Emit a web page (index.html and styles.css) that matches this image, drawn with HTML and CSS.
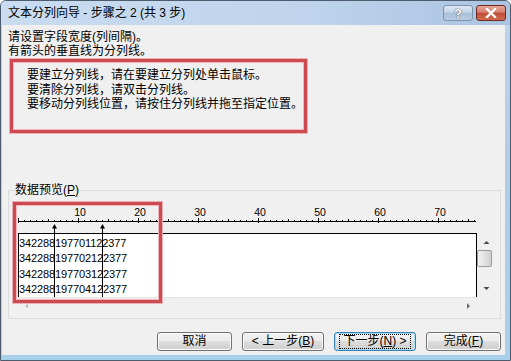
FILE: index.html
```html
<!DOCTYPE html>
<html lang="zh-CN">
<head>
<meta charset="utf-8">
<title>文本分列向导</title>
<link rel="stylesheet" href="styles.css">
</head>
<body>
<div class="window">
  <div class="titlebar">
    <span class="title">文本分列向导 - 步骤之 2 (共 3 步)</span>
    <div class="caption-btns">
      <div class="cbtn help">?</div>
      <div class="cbtn close">
        <svg width="12" height="10" viewBox="0 0 12 10"><path d="M2 1 L10 9 M10 1 L2 9" stroke="#fff" stroke-width="2.4" stroke-linecap="square"/></svg>
      </div>
    </div>
  </div>
  <div class="client">
    <p class="intro">请设置字段宽度(列间隔)。<br>有箭头的垂直线为分列线。</p>
    <div class="hint">
      要建立分列线，请在要建立分列处单击鼠标。<br>
      要清除分列线，请双击分列线。<br>
      要移动分列线位置，请按住分列线并拖至指定位置。
    </div>
    <div class="preview-label">数据预览(<u>P</u>)</div>
    <div class="group">
      <svg class="ruler" width="460" height="42" viewBox="0 0 460 42">
        <defs>
          <pattern id="minor" width="6" height="1" patternUnits="userSpaceOnUse" x="0" y="0">
            <rect width="1" height="1" fill="#000"/>
          </pattern>
        </defs>
        <rect x="0" y="29" width="457" height="1" fill="url(#minor)"/>
        <rect x="0" y="30" width="458" height="1" fill="#000"/>
        <path d="M0.5 27v5M60.5 27v5M120.5 27v5M180.5 27v5M240.5 27v5M300.5 27v5M360.5 27v5M420.5 27v5" stroke="#000" stroke-width="1"/>
        <path d="M30.5 28v2M90.5 28v2M150.5 28v2M210.5 28v2M270.5 28v2M330.5 28v2M390.5 28v2M450.5 28v2" stroke="#000" stroke-width="1"/>
        <g class="ruler-num" text-anchor="middle">
          <text x="62" y="25">10</text>
          <text x="122" y="25">20</text>
          <text x="182" y="25">30</text>
          <text x="242" y="25">40</text>
          <text x="302" y="25">50</text>
          <text x="362" y="25">60</text>
          <text x="422" y="25">70</text>
        </g>
      </svg>
      <div class="data-row">
        <div class="data">
          <div>342288197701122377</div>
          <div>342288197702122377</div>
          <div>342288197703122377</div>
          <div>342288197704122377</div>
        </div>
        <div class="vscroll">
          <svg width="15" height="64" viewBox="0 0 15 64">
            <defs>
              <linearGradient id="thumb" x1="0" x2="1" y1="0" y2="0">
                <stop offset="0" stop-color="#f4f4f4"/>
                <stop offset="1" stop-color="#cfcfcf"/>
              </linearGradient>
            </defs>
            <path d="M6.5 11 L9.5 8 L12.5 11 Z" fill="#4a4a4a"/>
            <rect x="0.5" y="17.5" width="14" height="16" rx="1.5" fill="url(#thumb)" stroke="#9a9a9a"/>
            <path d="M6.5 54 L9.5 57 L12.5 54 Z" fill="#4a4a4a"/>
          </svg>
        </div>
      </div>
      <div class="hscroll">
        <svg width="459" height="15" viewBox="0 0 459 15">
          <path d="M10 6 L7 8 L10 10 Z" fill="#b8b8b8"/>
          <path d="M449 5 L452 8 L449 11 Z" fill="#6a6a6a"/>
        </svg>
      </div>
      <svg class="col-breaks" width="120" height="110" viewBox="0 0 120 110">
        <path d="M45.5 34 V106 M93.5 34 V106" stroke="#000" stroke-width="1"/>
        <path d="M45.5 33 L43 37.5 L48 37.5 Z M93.5 33 L91 37.5 L96 37.5 Z" fill="#000"/>
      </svg>
      <div class="mark"></div>
    </div>
    <div class="buttons">
      <button class="btn w75">取消</button>
      <button class="btn w82">&lt; 上一步(<u>B</u>)</button>
      <button class="btn w82 default"><span class="focus">下一步(<u>N</u>) &gt;</span></button>
      <button class="btn w75">完成(<u>F</u>)</button>
    </div>
  </div>
</div>
</body>
</html>
```
FILE: styles.css
```css
* { box-sizing: border-box; }
html, body { margin: 0; padding: 0; background: #fff; }
body {
  font-family: "Liberation Sans", "Noto Sans CJK SC", sans-serif;
  font-size: 12px;
  color: #000;
}
.window {
  width: 511px;
  height: 361px;
  display: flex;
  flex-direction: column;
  border: 1px solid #4d5d6e;
  border-radius: 6px 6px 0 0;
  background: linear-gradient(180deg, #c7dbef 0%, #b9d1ea 10%, #aecde6 60%, #a7d0ea 100%);
  overflow: hidden;
}
.titlebar {
  height: 24px;
  display: flex;
  align-items: flex-start;
  justify-content: space-between;
  padding: 0 4px 0 7px;
  background: linear-gradient(90deg, #c9dcf0 0%, #bfd4ec 60%, #a9c3e1 100%);
}
.title {
  line-height: 24px;
  font-size: 12px;
  color: #000;
}
.caption-btns {
  display: flex;
  gap: 3px;
  margin-top: 4px;
}
.cbtn {
  width: 30px;
  height: 16px;
  border-radius: 3px;
  display: flex;
  align-items: center;
  justify-content: center;
}
.help {
  border: 1px solid #7b93ad;
  background: linear-gradient(180deg, #dfe8f2 0%, #c3d3e6 45%, #a9bfd8 50%, #b9cde3 100%);
  color: #fff;
  font-weight: bold;
  font-size: 13px;
  text-shadow: 0 0 1px #33485f, 0 0 1px #33485f;
}
.close {
  border: 1px solid #6e2a24;
  background: linear-gradient(180deg, #e7a597 0%, #d7806f 45%, #c04a36 50%, #d26b4f 100%);
}
.client {
  flex: 1;
  margin: 0 5px 5px 1px;
  background: #f0f0f0;
  padding: 5px 0 0 6px;
}
.intro {
  margin: 0;
  line-height: 14px;
}
.hint {
  margin: 1px 0 0 2px;
  width: 297px;
  height: 74px;
  border: 3px solid #cc4a52;
  box-shadow: inset 0 0 0 1px #f1b7ba, 0 0 0 1px #eab0b3;
  padding: 6px 0 0 14px;
  line-height: 14.5px;
}
.preview-label {
  margin: 50px 0 0 7px;
  line-height: 14px;
  width: max-content;
  padding-right: 2px;
  background: #f0f0f0;
  position: relative;
  z-index: 1;
}
.group {
  margin-top: -7px;
  width: 493px;
  height: 129px;
  border: 1px solid #dadde0;
  position: relative;
}
.ruler {
  display: block;
  margin-left: 9px;
}
.ruler-num {
  font-family: "Liberation Sans", sans-serif;
  font-size: 10.5px;
  fill: #000;
}
.data-row {
  display: flex;
  margin-left: 9px;
  height: 64px;
}
.data {
  width: 459px;
  height: 64px;
  background: #fff;
  border: 1px solid #000;
  border-bottom: none;
  padding-top: 1.5px;
  overflow: hidden;
  font-family: "Liberation Sans", sans-serif;
  font-size: 11px;
  letter-spacing: -0.12px;
  line-height: 15.5px;
}
.vscroll {
  width: 15px;
  height: 64px;
}
.vscroll svg, .hscroll svg { display: block; }
.hscroll {
  margin-left: 9px;
  width: 459px;
  height: 15px;
  border-top: 1px solid #e4e4e4;
}
.col-breaks {
  position: absolute;
  left: 0;
  top: 0;
  pointer-events: none;
}
.mark {
  position: absolute;
  left: 4px;
  top: 11px;
  width: 149px;
  height: 101px;
  border: 3px solid #cc4a52;
  box-shadow: inset 0 0 0 1px #f1b7ba, 0 0 0 1px #eab0b3;
  pointer-events: none;
}
.buttons {
  display: flex;
  justify-content: flex-end;
  gap: 10px;
  margin-top: 13px;
  padding-right: 4px;
}
.btn {
  height: 19px;
  padding: 0;
  font-family: "Liberation Sans", "Noto Sans CJK SC", sans-serif;
  font-size: 12px;
  line-height: 15px;
  color: #000;
  border: 1px solid #707070;
  border-radius: 3px;
  background: linear-gradient(180deg, #f2f2f2 0%, #ebebeb 49%, #dddddd 50%, #cfcfcf 100%);
  box-shadow: inset 0 0 0 1px #fbfbfb;
  display: flex;
  align-items: center;
  justify-content: center;
}
.btn u { text-decoration: underline; }
.w75 { width: 75px; }
.w82 { width: 82px; }
.default {
  border-color: #3c7fb1;
  box-shadow: inset 0 0 0 1px #a8dcf5;
}
.focus {
  border: 1px dotted #000;
  padding: 0 3px;
  line-height: 13px;
}
```
